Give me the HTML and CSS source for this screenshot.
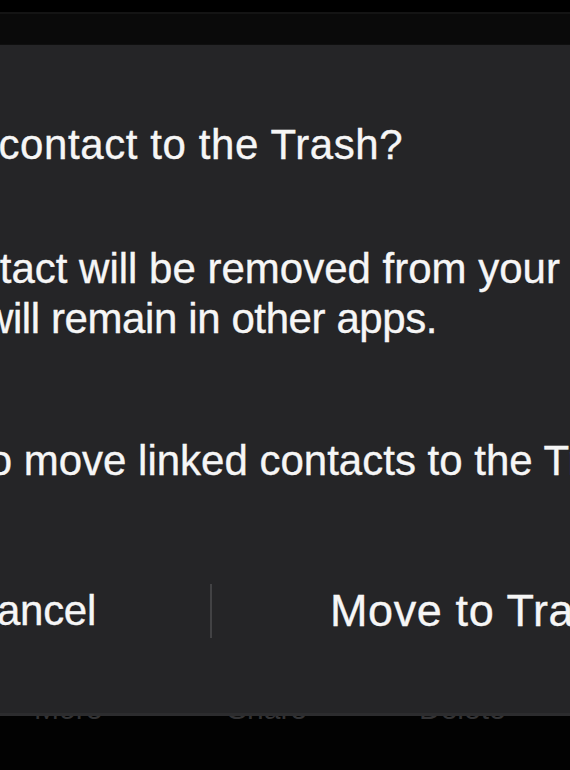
FILE: index.html
```html
<!DOCTYPE html>
<html lang="en">
<head>
<meta charset="utf-8">
<title>Move to Trash</title>
<link rel="stylesheet" href="styles.css">
</head>
<body>
<div class="screen">
  <div class="status"></div>
  <div class="navband"></div>
  <div class="dialog">
    <h1 class="title"><span class="crop-title">Move this contact to the Trash?</span></h1>
    <p class="message">
      <span class="line crop-l1">contact will be removed from your</span>
      <span class="line crop-l2">will remain in other apps.</span>
    </p>
    <p class="message linked"><span class="line crop-l3">to move linked contacts to the Trash</span></p>
    <div class="actions">
      <div class="btn cancel"><span class="crop-cancel">Cancel</span></div>
      <div class="sep"></div>
      <div class="btn confirm">Move to Trash</div>
    </div>
  </div>
  <div class="tabbar">
    <span class="tab t1">More</span>
    <span class="tab t2">Share</span>
    <span class="tab t3">Delete</span>
  </div>
</div>
</body>
</html>
```

FILE: styles.css
```css
html, body {
  margin: 0;
  padding: 0;
  background: #000;
}

.screen {
  width: 570px;
  height: 770px;
  overflow: hidden;
  background: #020202;
  font-family: "Liberation Sans", Arial, sans-serif;
}

.status {
  height: 12px;
  background: #000;
}

.navband {
  height: 33px;
  box-sizing: border-box;
  background: #0a0a0a;
  border-top: 2px solid #141414;
  border-bottom: 1px solid #0f0f0f;
}

.dialog {
  position: relative;
  z-index: 2;
  height: 671px;
  box-sizing: border-box;
  background: #252527;
  border-bottom: 3px solid #2c2c2e;
  overflow: hidden;
  padding-top: 75px;
  color: #f6f6f6;
  font-size: 42px;
  line-height: 50px;
  white-space: nowrap;
  -webkit-text-stroke: 0.35px #f6f6f6;
}

.title {
  margin: 0;
  font-size: 42px;
  font-weight: normal;
  line-height: 50px;
  letter-spacing: 0.6px;
}

.crop-title {
  display: inline-block;
  margin-left: -199px;
}

.message {
  margin: 74px 0 0 0;
}

.message.linked {
  margin-top: 92px;
}

.line {
  display: block;
}

.crop-l1 {
  margin-left: -68px;
}

.crop-l2 {
  margin-left: -17px;
  letter-spacing: -0.4px;
}

.crop-l3 {
  margin-left: -23px;
}

.actions {
  margin-top: 100px;
  display: flex;
  align-items: center;
  height: 50px;
}

.btn {
  line-height: 50px;
}

.cancel {
  width: 210px;
  flex: none;
}

.crop-cancel {
  display: inline-block;
  margin-left: -33px;
  letter-spacing: -0.3px;
}

.sep {
  flex: none;
  width: 2px;
  height: 54px;
  background: #424244;
}

.confirm {
  padding-left: 118px;
  font-size: 45px;
  letter-spacing: 0.6px;
}

.tabbar {
  position: relative;
  z-index: 1;
  height: 8px;
  overflow: hidden;
  display: flex;
  align-items: flex-end;
  font-size: 30px;
  line-height: 30px;
  color: #333335;
  white-space: nowrap;
}

.tab {
  flex: none;
  height: 30px;
}

.t1 {
  margin-left: 34px;
  width: 193px;
}

.t2 {
  width: 192px;
}
```
